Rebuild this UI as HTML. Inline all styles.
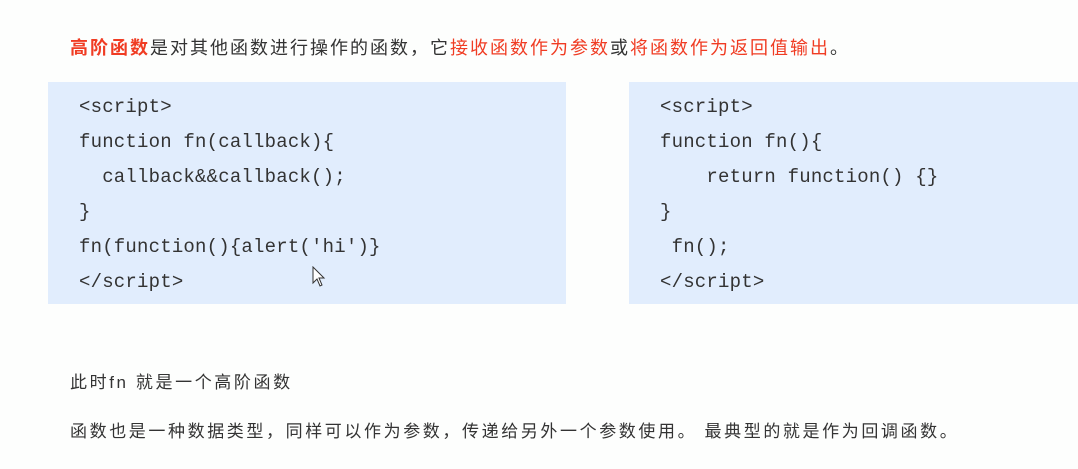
<!DOCTYPE html>
<html><head><meta charset="utf-8"><style>
body{margin:0;width:1078px;height:469px;background:#fdfefd;position:relative;overflow:hidden;font-family:"Liberation Sans","Noto Sans CJK SC",sans-serif;color:#333;}
.t{position:absolute;font-size:18px;letter-spacing:2px;white-space:nowrap;}
.r{color:#f03c23}
.box{position:absolute;background:#e1edfd;top:82px;height:222px}
.code{position:absolute;font-family:"Liberation Mono",monospace;font-size:19px;letter-spacing:0.2px;color:#333;white-space:pre;line-height:35px;}
</style></head><body>
<div class="t" style="left:70px;top:34px"><b class="r">高阶函数</b>是对其他函数进行操作的函数，它<span class="r">接收函数作为参数</span>或<span class="r">将函数作为返回值输出</span>。</div>
<div class="box" style="left:48px;width:518px"></div>
<div class="box" style="left:629px;width:449px"></div>
<div class="code" style="left:79px;top:90px">&lt;script&gt;
function fn(callback){
  callback&amp;&amp;callback();
}
fn(function(){alert('hi')}
&lt;/script&gt;</div>
<div class="code" style="left:660px;top:90px">&lt;script&gt;
function fn(){
    return function() {}
}
 fn();
&lt;/script&gt;</div>
<svg style="position:absolute;left:312px;top:266px" width="14" height="22" viewBox="0 0 14 22"><path d="M1 1 L1 17 L5 13 L8 20 L10 19 L7 12 L12 12 Z" fill="#fff" stroke="#333" stroke-width="1"/></svg>
<div class="t" style="left:70px;top:368px;font-size:17px;letter-spacing:2.6px">此时fn 就是一个高阶函数</div>
<div class="t" style="left:70px;top:417px;font-size:17px;letter-spacing:2.6px">函数也是一种数据类型，同样可以作为参数，传递给另外一个参数使用。 最典型的就是作为回调函数。</div>
</body></html>
